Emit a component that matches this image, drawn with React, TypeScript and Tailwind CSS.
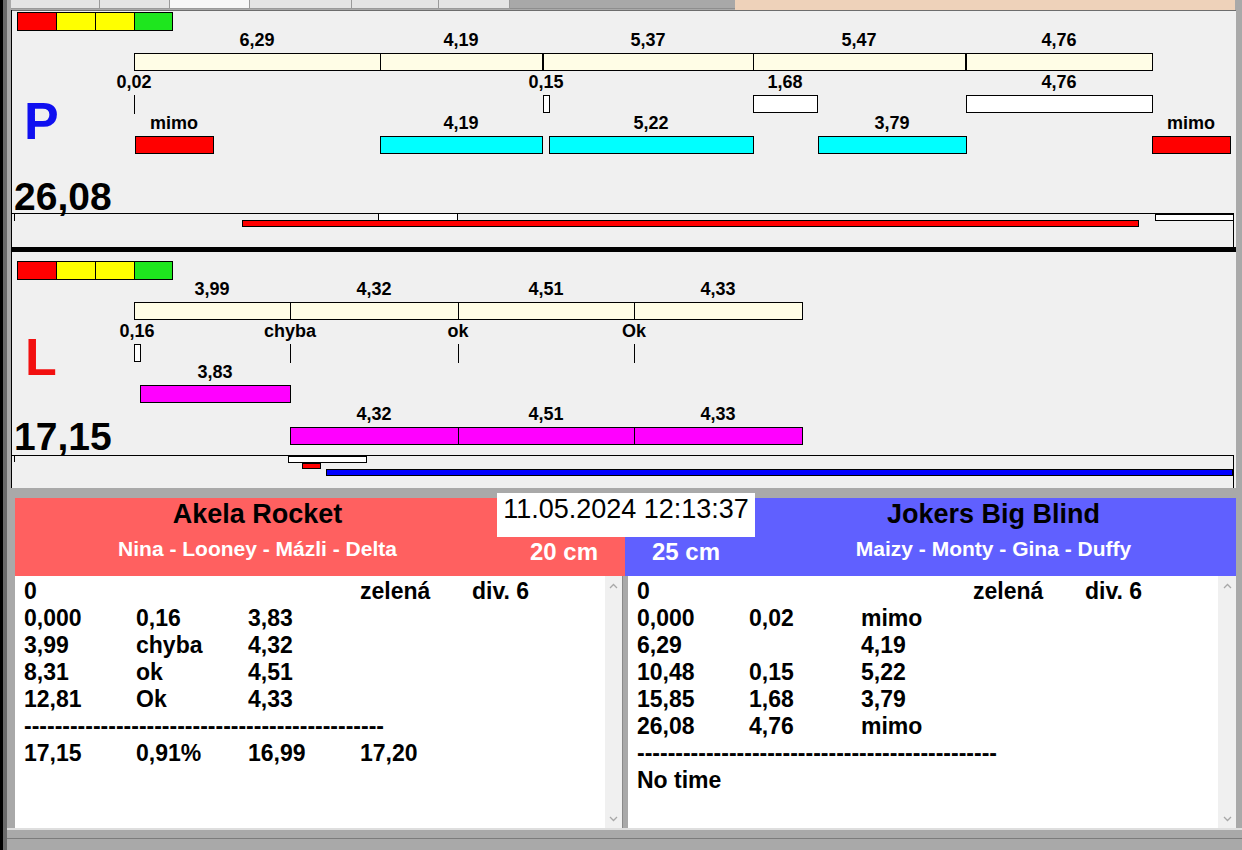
import React from 'react';

type Rect = { x1: number; x2: number; y: number; h: number; c: string };
type Label = { cx: number; cy: number; t: string };
type Line = { x1: number; y1: number; x2: number; y2: number };

type Lane = {
  y0: number;
  rects: Rect[];
  lines: Line[];
  labels: Label[];
  letter: string;
  letterClass: string;
  letterLeft: number;
  letterTop: number;
  total: string;
  totalTop: number;
};

// page x of the chart canvas' left edge (inside the black border)
const X0 = 12;

const CREAM = 'bg-[#fffde6]';
const CYAN = 'bg-[#00ffff]';
const MAGENTA = 'bg-[#ff00ff]';
const RED = 'bg-[#ff0000]';
const YELLOW = 'bg-[#ffff00]';
const GREEN = 'bg-[#1ee61e]';
const WHITE = 'bg-white';
const BLUE = 'bg-[#0000ff]';

const squares = (y: number): Rect[] => [
  { x1: 17, x2: 56, y, h: 19, c: RED },
  { x1: 56, x2: 95, y, h: 19, c: YELLOW },
  { x1: 95, x2: 134, y, h: 19, c: YELLOW },
  { x1: 134, x2: 172, y, h: 19, c: GREEN },
];

const laneP: Lane = {
  y0: 11,
  rects: [
    ...squares(12),
    { x1: 134, x2: 380, y: 53, h: 18, c: CREAM },
    { x1: 380, x2: 542, y: 53, h: 18, c: CREAM },
    { x1: 543, x2: 753, y: 53, h: 18, c: CREAM },
    { x1: 753, x2: 965, y: 53, h: 18, c: CREAM },
    { x1: 966, x2: 1152, y: 53, h: 18, c: CREAM },
    { x1: 543, x2: 549, y: 95, h: 18, c: WHITE },
    { x1: 753, x2: 817, y: 95, h: 18, c: WHITE },
    { x1: 966, x2: 1152, y: 95, h: 18, c: WHITE },
    { x1: 135, x2: 213, y: 136, h: 18, c: RED },
    { x1: 380, x2: 542, y: 136, h: 18, c: CYAN },
    { x1: 549, x2: 753, y: 136, h: 18, c: CYAN },
    { x1: 818, x2: 966, y: 136, h: 18, c: CYAN },
    { x1: 1152, x2: 1230, y: 136, h: 18, c: RED },
    { x1: 378, x2: 457, y: 213, h: 8, c: WHITE },
    { x1: 242, x2: 1138, y: 220, h: 7, c: RED },
    { x1: 1155, x2: 1233, y: 214, h: 7, c: WHITE },
  ],
  lines: [
    { x1: 134, y1: 95, x2: 134, y2: 113 },
    { x1: 12, y1: 213, x2: 1233, y2: 213 },
    { x1: 14, y1: 213, x2: 14, y2: 220 },
    { x1: 1233, y1: 213, x2: 1233, y2: 246 },
  ],
  labels: [
    { cx: 257, cy: 40, t: '6,29' },
    { cx: 461, cy: 40, t: '4,19' },
    { cx: 648, cy: 40, t: '5,37' },
    { cx: 859, cy: 40, t: '5,47' },
    { cx: 1059, cy: 40, t: '4,76' },
    { cx: 134, cy: 82, t: '0,02' },
    { cx: 546, cy: 82, t: '0,15' },
    { cx: 785, cy: 82, t: '1,68' },
    { cx: 1059, cy: 82, t: '4,76' },
    { cx: 174, cy: 123, t: 'mimo' },
    { cx: 461, cy: 123, t: '4,19' },
    { cx: 651, cy: 123, t: '5,22' },
    { cx: 892, cy: 123, t: '3,79' },
    { cx: 1191, cy: 123, t: 'mimo' },
  ],
  letter: 'P',
  letterClass: 'text-[#1010f0]',
  letterLeft: 24,
  letterTop: 95,
  total: '26,08',
  totalTop: 177,
};

const laneL: Lane = {
  y0: 252,
  rects: [
    ...squares(261),
    { x1: 134, x2: 290, y: 302, h: 18, c: CREAM },
    { x1: 290, x2: 458, y: 302, h: 18, c: CREAM },
    { x1: 458, x2: 634, y: 302, h: 18, c: CREAM },
    { x1: 634, x2: 802, y: 302, h: 18, c: CREAM },
    { x1: 134, x2: 140, y: 344, h: 18, c: WHITE },
    { x1: 140, x2: 290, y: 385, h: 18, c: MAGENTA },
    { x1: 290, x2: 458, y: 427, h: 18, c: MAGENTA },
    { x1: 458, x2: 634, y: 427, h: 18, c: MAGENTA },
    { x1: 634, x2: 802, y: 427, h: 18, c: MAGENTA },
    { x1: 288, x2: 366, y: 456, h: 7, c: WHITE },
    { x1: 302, x2: 320, y: 463, h: 6, c: RED },
    { x1: 326, x2: 1232, y: 469, h: 7, c: BLUE },
  ],
  lines: [
    { x1: 290, y1: 344, x2: 290, y2: 362 },
    { x1: 458, y1: 344, x2: 458, y2: 362 },
    { x1: 634, y1: 344, x2: 634, y2: 362 },
    { x1: 12, y1: 455, x2: 1233, y2: 455 },
    { x1: 14, y1: 455, x2: 14, y2: 461 },
    { x1: 1233, y1: 455, x2: 1233, y2: 487 },
  ],
  labels: [
    { cx: 212, cy: 289, t: '3,99' },
    { cx: 374, cy: 289, t: '4,32' },
    { cx: 546, cy: 289, t: '4,51' },
    { cx: 718, cy: 289, t: '4,33' },
    { cx: 137, cy: 331, t: '0,16' },
    { cx: 290, cy: 331, t: 'chyba' },
    { cx: 458, cy: 331, t: 'ok' },
    { cx: 634, cy: 331, t: 'Ok' },
    { cx: 215, cy: 372, t: '3,83' },
    { cx: 374, cy: 414, t: '4,32' },
    { cx: 546, cy: 414, t: '4,51' },
    { cx: 718, cy: 414, t: '4,33' },
  ],
  letter: 'L',
  letterClass: 'text-[#f21010]',
  letterLeft: 25,
  letterTop: 331,
  total: '17,15',
  totalTop: 417,
};

const LaneView: React.FC<{ lane: Lane; className: string }> = ({ lane, className }) => (
  <div className={`relative bg-[#f0f0f0] ${className}`}>
    <div
      className={`absolute text-[52px] font-bold leading-none ${lane.letterClass}`}
      style={{ left: lane.letterLeft - X0, top: lane.letterTop - lane.y0 }}
    >
      {lane.letter}
    </div>
    <div
      className="absolute text-[39px] font-bold leading-none text-black"
      style={{ left: 14 - X0, top: lane.totalTop - lane.y0 }}
    >
      {lane.total}
    </div>
    {lane.rects.map((r, i) => (
      <div
        key={`r${i}`}
        className={`absolute border border-black ${r.c}`}
        style={{ left: r.x1 - X0, top: r.y - lane.y0, width: r.x2 - r.x1 + 1, height: r.h }}
      />
    ))}
    {lane.lines.map((l, i) => (
      <div
        key={`l${i}`}
        className="absolute bg-black"
        style={{ left: l.x1 - X0, top: l.y1 - lane.y0, width: l.x2 - l.x1 + 1, height: l.y2 - l.y1 + 1 }}
      />
    ))}
    {lane.labels.map((t, i) => (
      <div
        key={`t${i}`}
        className="absolute w-[100px] whitespace-nowrap text-center text-[18px] font-bold leading-[20px] text-black"
        style={{ left: t.cx - X0 - 50, top: t.cy - lane.y0 - 10 }}
      >
        {t.t}
      </div>
    ))}
  </div>
);

const DASHES = '-'.repeat(47);

const leftRows: string[][] = [
  ['0', '', '', 'zelená', 'div. 6'],
  ['0,000', '0,16', '3,83'],
  ['3,99', 'chyba', '4,32'],
  ['8,31', 'ok', '4,51'],
  ['12,81', 'Ok', '4,33'],
  [DASHES],
  ['17,15', '0,91%', '16,99', '17,20'],
];

const rightRows: string[][] = [
  ['0', '', '', 'zelená', 'div. 6'],
  ['0,000', '0,02', 'mimo'],
  ['6,29', '', '4,19'],
  ['10,48', '0,15', '5,22'],
  ['15,85', '1,68', '3,79'],
  ['26,08', '4,76', 'mimo'],
  [DASHES],
  ['No time'],
];

const Sheet: React.FC<{ rows: string[][] }> = ({ rows }) => (
  <div className="w-[590px] shrink-0 bg-white pl-[9px] pt-[2px] text-[23px] font-bold leading-[27px] text-black">
    {rows.map((r, i) =>
      r.length === 1 ? (
        <div key={i} className="h-[27px] whitespace-nowrap">{r[0]}</div>
      ) : (
        <div key={i} className="flex h-[27px] whitespace-nowrap">
          {r.map((c, j) => (
            <div key={j} className="w-[112px] shrink-0">{c}</div>
          ))}
        </div>
      )
    )}
  </div>
);

const ScrollBar: React.FC<{ className: string }> = ({ className }) => (
  <div className={`flex shrink-0 flex-col items-center justify-between bg-[#f0f0f0] pb-[6px] pt-[7px] ${className}`}>
    <svg width="9" height="6" viewBox="0 0 9 6">
      <path d="M1 5 L4.5 1.5 L8 5" stroke="#a8a8a8" strokeWidth="1.3" fill="none" />
    </svg>
    <svg width="9" height="6" viewBox="0 0 9 6">
      <path d="M1 1 L4.5 4.5 L8 1" stroke="#a8a8a8" strokeWidth="1.3" fill="none" />
    </svg>
  </div>
);

const tabs = [89, 70, 80, 102, 87, 71];

const TopStrip: React.FC = () => (
  <div className="flex h-[10px] shrink-0">
    <div className="w-[4px] bg-[#a9a9a9]" />
    <div className="flex w-[499px]">
      {tabs.map((w, i) => (
        <div
          key={i}
          className={`h-[9px] border-b border-r border-[#9a9a9a] ${i === 2 ? 'bg-[#f7f7f7]' : 'bg-[#e4e4e4]'}`}
          style={{ width: w }}
        />
      ))}
    </div>
    <div className="h-[9px] w-[225px] border-b border-[#8e8e8e] bg-[#a8a8a8]" />
    <div className="w-[500px] bg-[#eed2ba]" />
    <div className="flex-1 bg-[#a9a9a9]" />
  </div>
);

export default function App() {
  return (
    <div className="flex h-[850px] w-[1242px] overflow-hidden bg-[#a9a9a9] font-['Liberation_Sans',Arial,sans-serif] text-black">
      <div className="w-[3px] shrink-0 bg-black" />
      <div className="w-[4px] shrink-0 bg-[#6a6a6a]" />
      <div className="flex flex-1 flex-col">
        <TopStrip />

        <div className="ml-[4px] w-[1225px] shrink-0 border-l border-black">
          <LaneView lane={laneP} className="h-[237px] border-t border-[#6d6d6d]" />
          <div className="h-[5px] bg-black" />
          <LaneView lane={laneL} className="h-[236px]" />
        </div>

        <div className="h-[10px] shrink-0" />

        <div className="relative ml-[8px] flex h-[330px] w-[1221px] shrink-0">
          {/* left team */}
          <div className="flex w-[610px] flex-col">
            <div className="h-[78px] bg-[#ff6060] pt-[1px]">
              <div className="w-[485px] text-center text-[27px] font-bold leading-[30px] text-black">Akela Rocket</div>
              <div className="mt-[8px] flex items-start">
                <div className="w-[485px] text-center text-[21px] font-bold leading-[24px] text-white">
                  Nina - Looney - Mázli - Delta
                </div>
                <div className="ml-auto pr-[27px] pt-[2px] text-[24px] font-bold leading-[26px] text-white">20 cm</div>
              </div>
            </div>
            <div className="flex flex-1">
              <Sheet rows={leftRows} />
              <ScrollBar className="w-[17px]" />
              <div className="flex-1 border-l border-[#8a8a8a] bg-[#a9a9a9]" />
            </div>
          </div>

          {/* right team */}
          <div className="flex w-[611px] flex-col">
            <div className="h-[78px] bg-[#6060ff] pt-[1px]">
              <div className="pl-[126px] text-center text-[27px] font-bold leading-[30px] text-black">Jokers Big Blind</div>
              <div className="mt-[8px] flex items-start">
                <div className="w-[126px] shrink-0 pl-[27px] pt-[2px] text-[24px] font-bold leading-[26px] text-white">25 cm</div>
                <div className="flex-1 text-center text-[21px] font-bold leading-[24px] text-white">
                  Maizy - Monty - Gina - Duffy
                </div>
              </div>
            </div>
            <div className="flex flex-1">
              <div className="w-[3px] shrink-0 bg-[#a9a9a9]" />
              <Sheet rows={rightRows} />
              <ScrollBar className="w-[18px]" />
            </div>
          </div>

          <div className="absolute left-[482px] top-[-5px] h-[44px] w-[258px] bg-white pt-px text-center text-[27px] font-normal leading-[30px] text-black">
            11.05.2024 12:13:37
          </div>
        </div>

        <div className="h-[22px] shrink-0 border-t-2 border-[#dedede]">
          <div className="mt-[8px] h-px bg-[#7c7c7c]" />
        </div>
      </div>
    </div>
  );
}
